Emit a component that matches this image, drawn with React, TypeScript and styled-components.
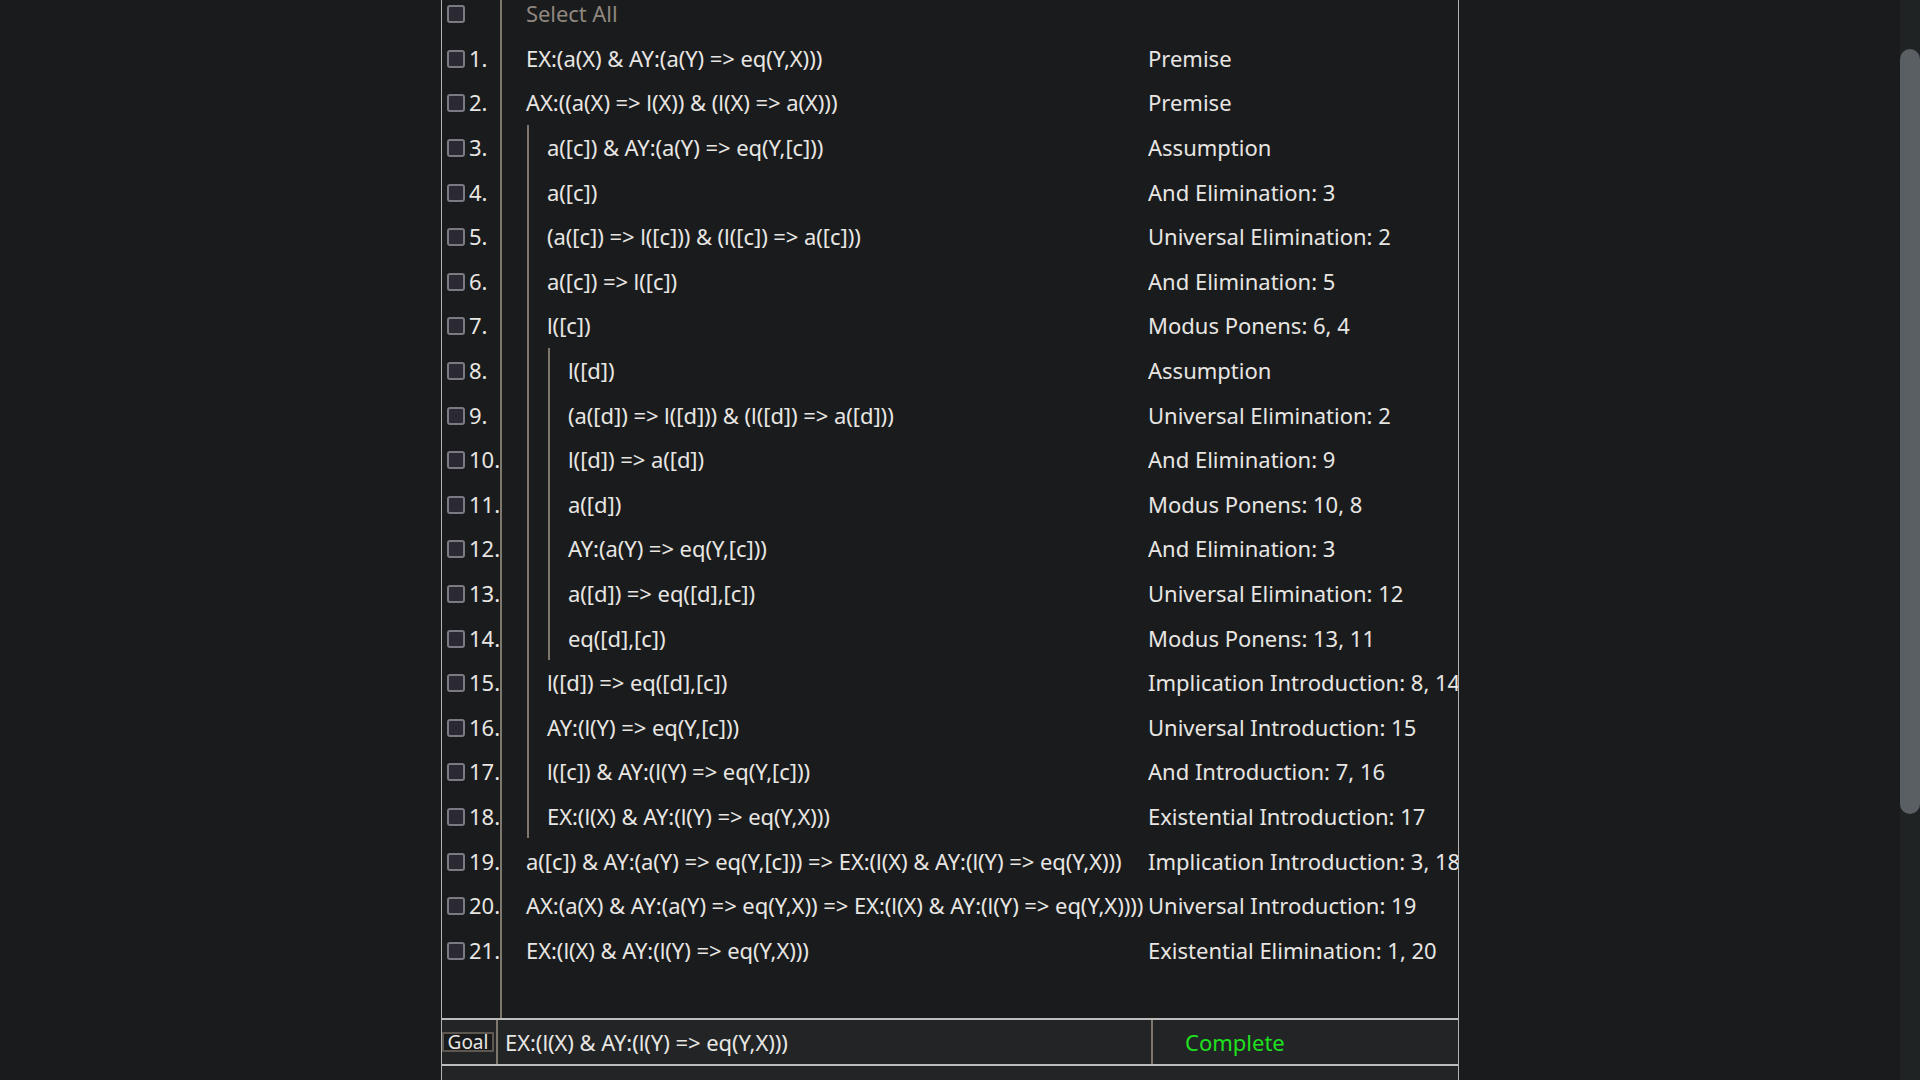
import { useLayoutEffect, useRef, useState } from 'react';
import { createGlobalStyle, styled } from 'styled-components';

const GlobalStyle = createGlobalStyle`
  html, body {
    margin: 0;
    padding: 0;
    background: #1a1b1d;
  }
  body {
    font-family: 'Noto Sans', 'Open Sans', sans-serif;
    color: #e8e6e3;
  }
`;

const Shell = styled.div`
  display: flex;
  height: 100vh;
  overflow: hidden;
`;

const Viewport = styled.div`
  flex: 1;
  overflow: hidden;
  background: #1a1b1d;
`;

const Track = styled.div`
  width: 20px;
  flex-shrink: 0;
  background: #202324;
`;

const Thumb = styled.div`
  width: 20px;
  border-radius: 10px;
  background: #5a5f63;
`;

const Panel = styled.div`
  width: 1018px;
  margin: 0 auto;
  padding-top: 60px;
  box-sizing: border-box;
  border-left: 1px solid #b3b3b3;
  border-right: 1px solid #b3b3b3;
  font-size: 22px;
`;

const List = styled.div`
  display: flex;
  flex-direction: column;
`;

const Row = styled.div`
  display: grid;
  grid-template-columns: 60px 646px 1fr;
  height: 44.6px;
`;

const Filler = styled(Row)`
  height: 45.5px;
`;

const CheckCell = styled.div`
  display: flex;
  align-items: center;
  gap: 4px;
  padding-left: 5px;
  box-sizing: border-box;
  border-right: 2px solid #7e776e;
  white-space: nowrap;
`;

const Check = styled.input.attrs({ type: 'checkbox' })`
  appearance: none;
  margin: 2px 0 0;
  width: 18px;
  height: 18px;
  flex-shrink: 0;
  box-sizing: border-box;
  border: 2px solid #7b7a82;
  border-radius: 3px;
  background: #2b2a33;
`;

const LineNo = styled.span`
  line-height: 1;
`;

const FormulaCell = styled.div`
  display: flex;
  padding-left: 24px;
  white-space: nowrap;
`;

const Bar = styled.span`
  flex-shrink: 0;
  width: 2px;
  margin: 0 18px 0 1px;
  background: #7e776e;
`;

const Formula = styled.span<{ $muted?: boolean }>`
  align-self: center;
  letter-spacing: -0.06px;
  color: ${({ $muted }) => ($muted ? '#8f887f' : '#e8e6e3')};
`;

const RuleCell = styled.div`
  display: flex;
  align-items: center;
  white-space: nowrap;
  overflow: hidden;
`;

const Footer = styled.div`
  display: grid;
  grid-template-columns: 56px 655px 1fr;
  height: 48px;
  box-sizing: border-box;
  border-top: 2px solid #bdbdbd;
  border-bottom: 2px solid #bdbdbd;
  background: #222426;
`;

const GoalCell = styled.div`
  display: flex;
  align-items: center;
  border-right: 2px solid #7e776e;
`;

const GoalTag = styled.span`
  width: 52px;
  height: 20px;
  box-sizing: border-box;
  border: 2px solid #5d574f;
  background: #181a1b;
  font-size: 19px;
  line-height: 17px;
  text-align: center;
`;

const GoalFormula = styled.div`
  display: flex;
  align-items: center;
  padding-left: 7px;
  border-right: 2px solid #7e776e;
  white-space: nowrap;
  letter-spacing: -0.06px;
`;

const Status = styled.div`
  display: flex;
  align-items: center;
  padding-left: 32px;
  color: #1fe01f;
`;

const Controls = styled.div`
  height: 390px;
  background: #222426;
`;

type Line = { text: string; rule: string; depth: number };

const lines: Line[] = [
  { text: 'EX:(a(X) & AY:(a(Y) => eq(Y,X)))', rule: 'Premise', depth: 0 },
  { text: 'AX:((a(X) => l(X)) & (l(X) => a(X)))', rule: 'Premise', depth: 0 },
  { text: 'a([c]) & AY:(a(Y) => eq(Y,[c]))', rule: 'Assumption', depth: 1 },
  { text: 'a([c])', rule: 'And Elimination: 3', depth: 1 },
  { text: '(a([c]) => l([c])) & (l([c]) => a([c]))', rule: 'Universal Elimination: 2', depth: 1 },
  { text: 'a([c]) => l([c])', rule: 'And Elimination: 5', depth: 1 },
  { text: 'l([c])', rule: 'Modus Ponens: 6, 4', depth: 1 },
  { text: 'l([d])', rule: 'Assumption', depth: 2 },
  { text: '(a([d]) => l([d])) & (l([d]) => a([d]))', rule: 'Universal Elimination: 2', depth: 2 },
  { text: 'l([d]) => a([d])', rule: 'And Elimination: 9', depth: 2 },
  { text: 'a([d])', rule: 'Modus Ponens: 10, 8', depth: 2 },
  { text: 'AY:(a(Y) => eq(Y,[c]))', rule: 'And Elimination: 3', depth: 2 },
  { text: 'a([d]) => eq([d],[c])', rule: 'Universal Elimination: 12', depth: 2 },
  { text: 'eq([d],[c])', rule: 'Modus Ponens: 13, 11', depth: 2 },
  { text: 'l([d]) => eq([d],[c])', rule: 'Implication Introduction: 8, 14', depth: 1 },
  { text: 'AY:(l(Y) => eq(Y,[c]))', rule: 'Universal Introduction: 15', depth: 1 },
  { text: 'l([c]) & AY:(l(Y) => eq(Y,[c]))', rule: 'And Introduction: 7, 16', depth: 1 },
  { text: 'EX:(l(X) & AY:(l(Y) => eq(Y,X)))', rule: 'Existential Introduction: 17', depth: 1 },
  {
    text: 'a([c]) & AY:(a(Y) => eq(Y,[c])) => EX:(l(X) & AY:(l(Y) => eq(Y,X)))',
    rule: 'Implication Introduction: 3, 18',
    depth: 0,
  },
  {
    text: 'AX:(a(X) & AY:(a(Y) => eq(Y,X)) => EX:(l(X) & AY:(l(Y) => eq(Y,X))))',
    rule: 'Universal Introduction: 19',
    depth: 0,
  },
  { text: 'EX:(l(X) & AY:(l(Y) => eq(Y,X)))', rule: 'Existential Elimination: 1, 20', depth: 0 },
];

const goal = 'EX:(l(X) & AY:(l(Y) => eq(Y,X)))';

export default function App() {
  const viewRef = useRef<HTMLDivElement>(null);
  const [thumb, setThumb] = useState({ top: 0, height: 0 });

  // the proof is shown scrolled a little way down; size the scrollbar thumb to match
  useLayoutEffect(() => {
    const el = viewRef.current;
    if (!el) return;
    el.scrollTop = 69;
    const track = el.clientHeight;
    const height = (track * el.clientHeight) / el.scrollHeight;
    const range = el.scrollHeight - el.clientHeight;
    const top = range > 0 ? (el.scrollTop / range) * (track - height) : 0;
    setThumb({ top, height });
  }, []);

  return (
    <>
      <GlobalStyle />
      <Shell>
        <Viewport ref={viewRef}>
          <Panel>
            <List>
              <Row>
                <CheckCell>
                  <Check />
                </CheckCell>
                <FormulaCell>
                  <Formula $muted>Select All</Formula>
                </FormulaCell>
                <RuleCell />
              </Row>
              {lines.map((line, i) => (
                <Row key={i}>
                  <CheckCell>
                    <Check />
                    <LineNo>{i + 1}.</LineNo>
                  </CheckCell>
                  <FormulaCell>
                    {Array.from({ length: line.depth }, (_, d) => (
                      <Bar key={d} />
                    ))}
                    <Formula>{line.text}</Formula>
                  </FormulaCell>
                  <RuleCell>{line.rule}</RuleCell>
                </Row>
              ))}
              <Filler>
                <CheckCell />
              </Filler>
            </List>
            <Footer>
              <GoalCell>
                <GoalTag>Goal</GoalTag>
              </GoalCell>
              <GoalFormula>{goal}</GoalFormula>
              <Status>Complete</Status>
            </Footer>
            <Controls />
          </Panel>
        </Viewport>
        <Track>
          <Thumb style={{ marginTop: thumb.top, height: thumb.height }} />
        </Track>
      </Shell>
    </>
  );
}
